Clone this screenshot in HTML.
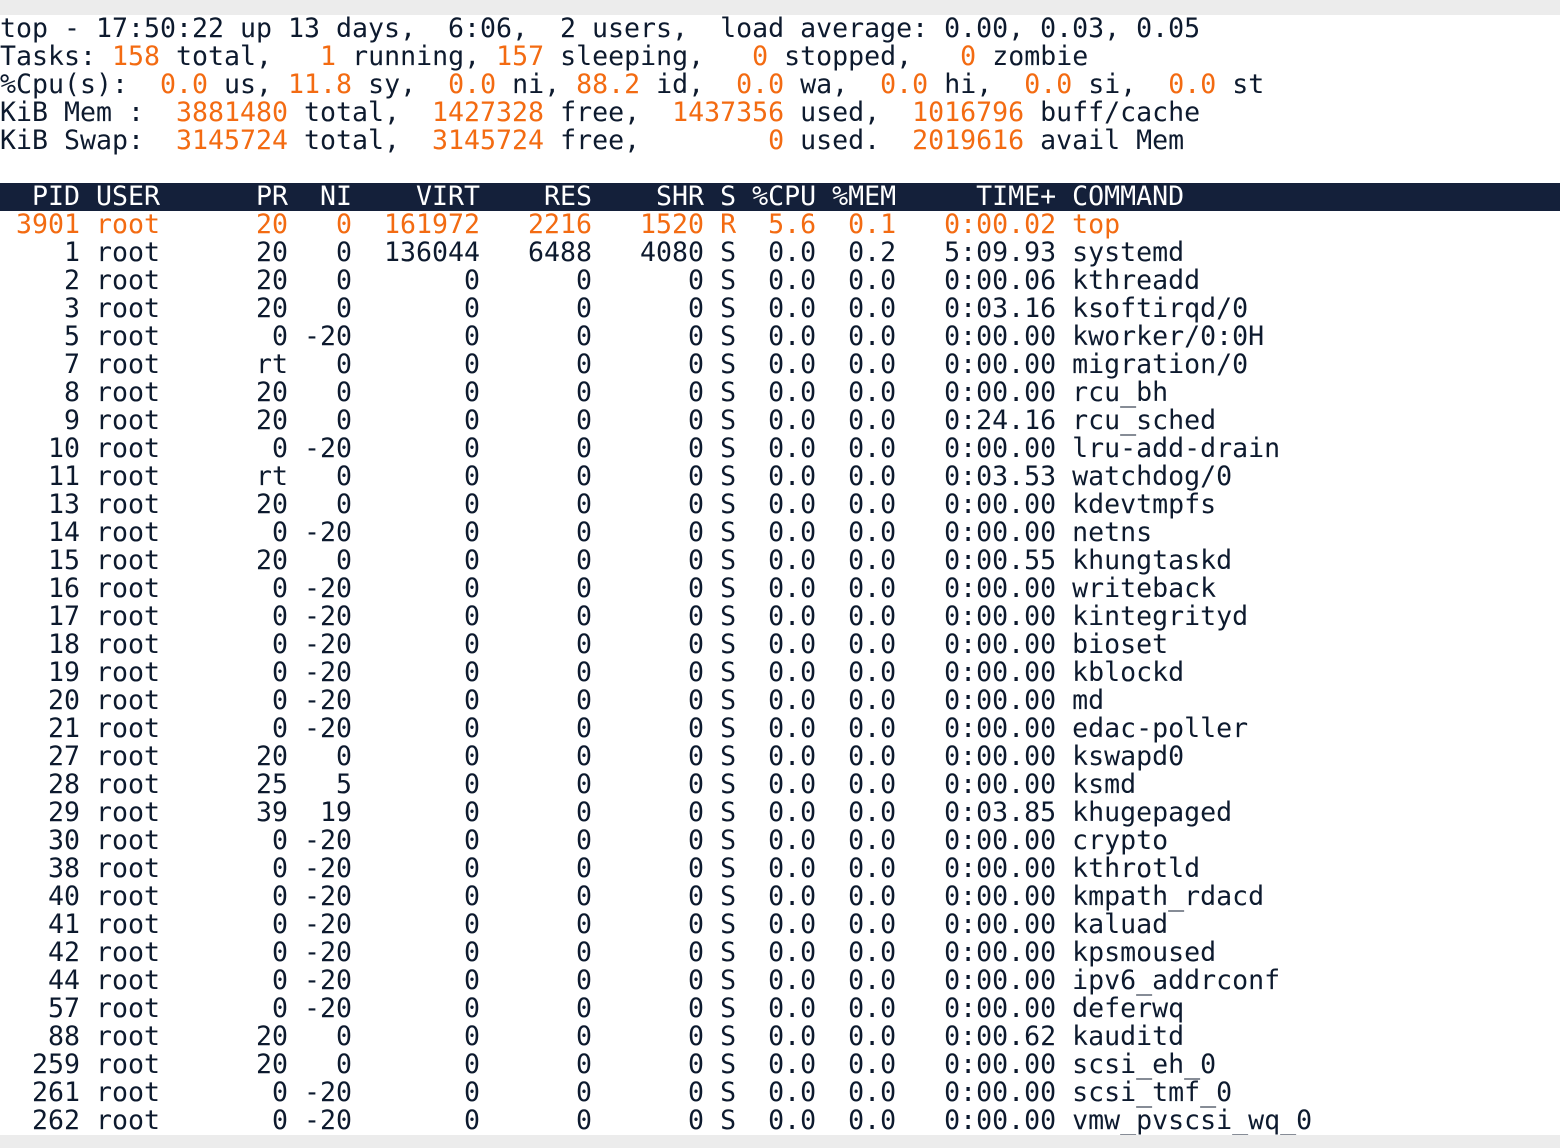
<!DOCTYPE html>
<html><head><meta charset="utf-8"><style>
html,body{margin:0;padding:0;background:#fff;width:1560px;height:1148px;overflow:hidden}
.top{position:absolute;left:0;top:0;width:1560px;height:15px;background:#ececec}
.bot{position:absolute;left:0;top:1135px;width:1560px;height:13px;background:#ececec}
pre{position:absolute;left:0;top:15px;margin:0;font-family:"DejaVu Sans Mono","Liberation Mono",monospace;font-size:26.58px;line-height:28px;color:#0d1a2e;white-space:pre}
.o{color:#f36b12}
.h{display:block;background:#14203a;color:#fff;width:1560px}
</style></head><body>
<div class="top"></div>
<pre>top - 17:50:22 up 13 days,  6:06,  2 users,  load average: 0.00, 0.03, 0.05
Tasks: <span class="o">158</span> total,   <span class="o">1</span> running, <span class="o">157</span> sleeping,   <span class="o">0</span> stopped,   <span class="o">0</span> zombie
%Cpu(s):  <span class="o">0.0</span> us, <span class="o">11.8</span> sy,  <span class="o">0.0</span> ni, <span class="o">88.2</span> id,  <span class="o">0.0</span> wa,  <span class="o">0.0</span> hi,  <span class="o">0.0</span> si,  <span class="o">0.0</span> st
KiB Mem :  <span class="o">3881480</span> total,  <span class="o">1427328</span> free,  <span class="o">1437356</span> used,  <span class="o">1016796</span> buff/cache
KiB Swap:  <span class="o">3145724</span> total,  <span class="o">3145724</span> free,        <span class="o">0</span> used.  <span class="o">2019616</span> avail Mem

<span class="h">  PID USER      PR  NI    VIRT    RES    SHR S %CPU %MEM     TIME+ COMMAND</span><span class="o"> 3901 root      20   0  161972   2216   1520 R  5.6  0.1   0:00.02 top</span>
    1 root      20   0  136044   6488   4080 S  0.0  0.2   5:09.93 systemd
    2 root      20   0       0      0      0 S  0.0  0.0   0:00.06 kthreadd
    3 root      20   0       0      0      0 S  0.0  0.0   0:03.16 ksoftirqd/0
    5 root       0 -20       0      0      0 S  0.0  0.0   0:00.00 kworker/0:0H
    7 root      rt   0       0      0      0 S  0.0  0.0   0:00.00 migration/0
    8 root      20   0       0      0      0 S  0.0  0.0   0:00.00 rcu_bh
    9 root      20   0       0      0      0 S  0.0  0.0   0:24.16 rcu_sched
   10 root       0 -20       0      0      0 S  0.0  0.0   0:00.00 lru-add-drain
   11 root      rt   0       0      0      0 S  0.0  0.0   0:03.53 watchdog/0
   13 root      20   0       0      0      0 S  0.0  0.0   0:00.00 kdevtmpfs
   14 root       0 -20       0      0      0 S  0.0  0.0   0:00.00 netns
   15 root      20   0       0      0      0 S  0.0  0.0   0:00.55 khungtaskd
   16 root       0 -20       0      0      0 S  0.0  0.0   0:00.00 writeback
   17 root       0 -20       0      0      0 S  0.0  0.0   0:00.00 kintegrityd
   18 root       0 -20       0      0      0 S  0.0  0.0   0:00.00 bioset
   19 root       0 -20       0      0      0 S  0.0  0.0   0:00.00 kblockd
   20 root       0 -20       0      0      0 S  0.0  0.0   0:00.00 md
   21 root       0 -20       0      0      0 S  0.0  0.0   0:00.00 edac-poller
   27 root      20   0       0      0      0 S  0.0  0.0   0:00.00 kswapd0
   28 root      25   5       0      0      0 S  0.0  0.0   0:00.00 ksmd
   29 root      39  19       0      0      0 S  0.0  0.0   0:03.85 khugepaged
   30 root       0 -20       0      0      0 S  0.0  0.0   0:00.00 crypto
   38 root       0 -20       0      0      0 S  0.0  0.0   0:00.00 kthrotld
   40 root       0 -20       0      0      0 S  0.0  0.0   0:00.00 kmpath_rdacd
   41 root       0 -20       0      0      0 S  0.0  0.0   0:00.00 kaluad
   42 root       0 -20       0      0      0 S  0.0  0.0   0:00.00 kpsmoused
   44 root       0 -20       0      0      0 S  0.0  0.0   0:00.00 ipv6_addrconf
   57 root       0 -20       0      0      0 S  0.0  0.0   0:00.00 deferwq
   88 root      20   0       0      0      0 S  0.0  0.0   0:00.62 kauditd
  259 root      20   0       0      0      0 S  0.0  0.0   0:00.00 scsi_eh_0
  261 root       0 -20       0      0      0 S  0.0  0.0   0:00.00 scsi_tmf_0
  262 root       0 -20       0      0      0 S  0.0  0.0   0:00.00 vmw_pvscsi_wq_0</pre>
<div class="bot"></div>
</body></html>
